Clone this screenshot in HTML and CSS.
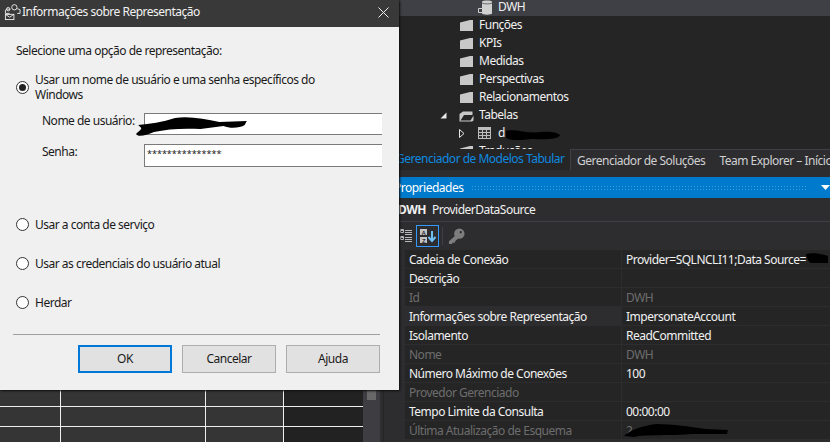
FILE: index.html
```html
<!DOCTYPE html>
<html lang="pt">
<head>
<meta charset="utf-8">
<title>Informações sobre Representação</title>
<link rel="stylesheet" href="styles.css">
</head>
<body>
<div class="desktop">
  <div class="left-pane">
    <div class="sheet">
      <div class="cells">
        <i></i><i></i><i></i><i class="blank"></i>
        <i></i><i></i><i></i><i class="blank"></i>
        <i></i><i></i><i></i><i class="blank"></i>
        <i></i><i></i><i></i><i class="blank"></i>
      </div>
      <div class="vscroll"><span class="vthumb"></span></div>
      <div class="gutter"></div>
    </div>
  </div>

  <div class="right-pane">
    <div class="tree">
      <div class="node sel l2">
        <svg class="ico" width="14" height="15" viewBox="0 0 14 15"><path d="M4 1.500C4 0 14 0 14 1.500V13.500C14 15 4 15 4 13.500Z" fill="#d0d0d0"/><path d="M4 3C6 4.200 12 4.200 14 3" fill="none" stroke="#3f3f46" stroke-width="0.700"/><path d="M0.500 8.500h4v4h-4z" fill="#3f3f46" stroke="#d0d0d0"/></svg>
        <span>DWH</span>
      </div>
      <div class="node"><svg class="folder" width="15" height="13" viewBox="0 0 15 13"><use href="#f"/></svg><span>Funções</span></div>
      <div class="node"><svg class="folder" width="15" height="13" viewBox="0 0 15 13"><use href="#f"/></svg><span>KPIs</span></div>
      <div class="node"><svg class="folder" width="15" height="13" viewBox="0 0 15 13"><use href="#f"/></svg><span>Medidas</span></div>
      <div class="node"><svg class="folder" width="15" height="13" viewBox="0 0 15 13"><use href="#f"/></svg><span>Perspectivas</span></div>
      <div class="node"><svg class="folder" width="15" height="13" viewBox="0 0 15 13"><use href="#f"/></svg><span>Relacionamentos</span></div>
      <div class="node">
        <svg class="twist" width="7" height="7" viewBox="0 0 7 7"><path d="M6.500 0.500V6.500H0.500Z" fill="#e8e8e8"/></svg>
        <svg class="folder" width="15" height="13" viewBox="0 0 15 13"><path d="M0.500 5L4 2.500H13.500V6H5L1.500 11.500H11.500L14.500 6.500V11.500L13 12.500H0.500Z" fill="#c8c8c8"/></svg>
        <span>Tabelas</span>
      </div>
      <div class="node l2">
        <svg class="twist2" width="6" height="9" viewBox="0 0 6 9"><path d="M0.500 0.500L5 4.500L0.500 8.500Z" fill="none" stroke="#e8e8e8"/></svg>
        <svg class="ico" width="13" height="12" viewBox="0 0 13 12"><rect width="13" height="12" fill="#bdbdbd"/><path d="M1 3h3v2h-3zM5 3h3v2h-3zM9 3h3v2h-3zM1 6h3v2h-3zM5 6h3v2h-3zM9 6h3v2h-3zM1 9h3v2h-3zM5 9h3v2h-3zM9 9h3v2h-3z" fill="#333"/></svg>
        <span>d</span>
        <svg class="scrawl table-scrawl" width="58" height="14" viewBox="0 0 58 14"><path d="M3 4C12 1 24 7 38 5C46 4 54 5 57 8C56 12 44 13 30 12C18 13 8 14 3 11Z" fill="#000"/></svg>
      </div>
      <div class="node"><svg class="folder" width="15" height="13" viewBox="0 0 15 13"><use href="#f"/></svg><span>Traduções</span></div>
    </div>

    <div class="tabs">
      <div class="tab active">Gerenciador de Modelos Tabular</div>
      <div class="tab-rest">
        <span>Gerenciador de Soluções</span>
        <span>Team Explorer – Início</span>
      </div>
    </div>

    <div class="props">
      <div class="props-title">
        <span>Propriedades</span>
        <span class="dots"></span>
        <svg width="9" height="5" viewBox="0 0 9 5"><path d="M0 0H9L4.500 5Z" fill="#fff"/></svg>
      </div>
      <div class="props-object"><b>DWH</b><span>ProviderDataSource</span></div>
      <div class="props-tools">
        <svg class="tool-cat" width="12" height="14" viewBox="0 0 12 14"><path d="M0 1.500h4M5 1.500h7M5 3.500h7M5 5.500h7M0 8.500h4M5 8.500h7M5 10.500h7M5 12.500h7" stroke="#b8b8b8" fill="none"/><path d="M0.500 0.500h3v3h-3zM0.500 7.500h3v3h-3z" fill="none" stroke="#b8b8b8"/></svg>
        <span class="tool-on">
          <svg width="18" height="16" viewBox="0 0 18 16"><path d="M1 1h7v6h-7zM1 9h7v6h-7z" fill="#c4c4c4"/><text x="4.500" y="6.500" class="az">A</text><text x="4.500" y="14.500" class="az">Z</text><path d="M13 3v9M9.500 9l3.500 4l3.500-4" fill="none" stroke="#6fc0f5" stroke-width="2"/></svg>
        </span>
        <span class="tool-sep"></span>
        <svg width="17" height="17" viewBox="0 0 18 18"><circle cx="12" cy="6" r="5.500" fill="#7d7d7d"/><circle cx="13.500" cy="4.500" r="1.200" fill="#2d2d30"/><path d="M8.500 7.500L1 14v3h3l1-1.500h2l1-2 3-2.500z" fill="#7d7d7d"/></svg>
      </div>
      <div class="grid">
        <div class="row"><span class="k">Cadeia de Conexão</span><span class="v">Provider=SQLNCLI11;Data Source=</span>
          <svg class="scrawl conn-scrawl" width="24" height="12" viewBox="0 0 24 12"><path d="M1 2C8 0 18 2 23 4V11H6C3 10 2 6 1 2Z" fill="#000"/></svg></div>
        <div class="row"><span class="k">Descrição</span><span class="v"></span></div>
        <div class="row off"><span class="k">Id</span><span class="v">DWH</span></div>
        <div class="row hover"><span class="k">Informações sobre Representação</span><span class="v">ImpersonateAccount</span></div>
        <div class="row"><span class="k">Isolamento</span><span class="v">ReadCommitted</span></div>
        <div class="row off"><span class="k">Nome</span><span class="v">DWH</span></div>
        <div class="row"><span class="k">Número Máximo de Conexões</span><span class="v">100</span></div>
        <div class="row off"><span class="k">Provedor Gerenciado</span><span class="v"></span></div>
        <div class="row"><span class="k">Tempo Limite da Consulta</span><span class="v">00:00:00</span></div>
        <div class="row off"><span class="k">Última Atualização de Esquema</span><span class="v">2</span>
          <svg class="scrawl date-scrawl" width="108" height="15" viewBox="0 0 108 15"><path d="M2 13C8 7 20 3 34 1C50 1 70 4 84 6L106 7L105 11L70 11C50 13 24 11 12 14Z" fill="#000"/></svg></div>
      </div>
    </div>
  </div>

  <div class="dialog">
    <div class="titlebar">
      <svg class="title-icon" width="17" height="18" viewBox="0 0 18 18"><g fill="none" stroke="#e8e8e8"><circle cx="11" cy="4" r="2.800"/><path d="M6 10.500h-4.500v-3.500l2-1h3M14 10.500h3v-4l-3-1"/><circle cx="4.500" cy="6" r="1.800"/><rect x="1.500" y="11.500" width="9" height="5.500"/><path d="M1.500 11.500l4.500 3 4.500-3"/></g></svg>
      <span class="title">Informações sobre Representação</span>
      <svg class="close" width="11" height="11" viewBox="0 0 11 11"><path d="M0.500 0.500L10.500 10.500M10.500 0.500L0.500 10.500" stroke="#f0f0f0" fill="none"/></svg>
    </div>
    <div class="body">
      <p class="lead">Selecione uma opção de representação:</p>
      <div class="opt first">
        <span class="radio on"></span>
        <span class="opt-label">Usar um nome de usuário e uma senha específicos do Windows</span>
      </div>
      <div class="fields">
        <label class="flabel">Nome de usuário:</label>
        <div class="input"><svg class="scrawl user-scrawl" width="116" height="22" viewBox="0 0 110 22" preserveAspectRatio="none"><path d="M3 10C14 9 26 7 38 3C52 1 66 4 80 7L106 6L104 10C100 13 90 14 84 11L62 14C46 13 30 14 18 17C10 21 2 22 1 19C3 16 8 14 5 12Z" fill="#000"/></svg></div>
        <label class="flabel">Senha:</label>
        <div class="input pass">***************</div>
      </div>
      <div class="opt a"><span class="radio"></span><span class="opt-label">Usar a conta de serviço</span></div>
      <div class="opt b"><span class="radio"></span><span class="opt-label">Usar as credenciais do usuário atual</span></div>
      <div class="opt b"><span class="radio"></span><span class="opt-label">Herdar</span></div>
      <div class="rule"></div>
      <div class="buttons">
        <button class="btn default">OK</button>
        <button class="btn">Cancelar</button>
        <button class="btn">Ajuda</button>
      </div>
    </div>
  </div>
</div>
<svg class="defs" width="0" height="0"><defs><path id="f" d="M1 3.500L11 1H14V12H1Z" fill="#c8c8c8"/></defs></svg>
</body>
</html>
```

FILE: styles.css
```css
* { box-sizing: border-box; }
html, body { margin: 0; padding: 0; }
body {
  width: 830px; height: 442px; overflow: hidden;
  background: #2d2d30;
  font: 12px/16px "Noto Sans", "Open Sans", sans-serif;
  letter-spacing: -0.5px;
}
.defs { position: absolute; }
.desktop { position: relative; width: 830px; height: 442px; display: flex; overflow: hidden; }

.left-pane { width: 390px; flex: none; display: flex; flex-direction: column; justify-content: flex-end; }
.sheet { display: flex; height: 64px; background: #1e1e1e; overflow: hidden; }
.cells { width: 363px; flex: none; height: 75px; display: grid; grid-template-columns: 61px 145px 78px 79px; grid-auto-rows: 20px; margin-top: -11px; align-content: start; }
.cells i { background: #353535; border-right: 1px solid #eee; border-bottom: 1px solid #eee; }
.cells .blank { background: #222; border-right: 0; border-bottom: 1px solid #eee; }
.vscroll { width: 17px; flex: none; background: #3e3e42; display: flex; justify-content: center; }
.vthumb { width: 9px; height: 10px; margin-top: 12px; background: #686868; }
.gutter { flex: 1; background: #252526; border-left: 3px solid #2d2d30; border-right: 6px solid #2d2d30; }

.right-pane { flex: 1; display: flex; flex-direction: column; min-width: 0; }
.tree { height: 149px; background: #252526; overflow: hidden; color: #f1f1f1; }
.node { height: 18px; display: flex; align-items: center; padding-left: 69px; position: relative; }
.node.l2 { padding-left: 88px; }
.node.sel { height: 16px; align-items: flex-start; background: #3f3f46; overflow: hidden; }
.node.sel .ico { margin-right: 6px; }
.node.sel span { line-height: 13px; }
.folder { margin-right: 5px; flex: none; }
.ico { margin-right: 7px; flex: none; }
.twist { position: absolute; left: 50px; top: 6px; }
.twist2 { position: absolute; left: 69px; top: 5px; }
.scrawl { position: absolute; }
.table-scrawl { left: 113px; top: 3px; }

.tabs { height: 21px; display: flex; background: #2d2d30; overflow: hidden; }
.tab.active { width: 180px; flex: none; background: #252526; color: #0e8ae0; white-space: nowrap; padding: 2px 0 0 6px; }
.tab-rest { flex: 1; min-width: 0; border-top: 1px solid #3f3f46; border-left: 1px solid #3f3f46; color: #d0d0d0; display: flex; gap: 14px; padding: 3px 0 0 6px; white-space: nowrap; }

.props { margin-top: 7px; flex: 1; display: flex; flex-direction: column; color: #f1f1f1; }
.props-title { height: 21px; background: #007acc; display: flex; align-items: center; padding: 0 0 0 4px; gap: 8px; color: #fff; }
.dots { flex: 1; height: 5px; margin-right: 6px; background-image: radial-gradient(#3f9fdd 0.6px, transparent 0.7px); background-size: 3px 3px; }
.props-object { height: 24px; display: flex; align-items: center; gap: 6px; padding-left: 8px; border-bottom: 1px solid #3f3f46; }
.props-object b { font-weight: 700; }
.props-tools { height: 28px; display: flex; align-items: center; gap: 4px; padding-left: 10px; }
.tool-on { width: 23px; height: 22px; border: 1px solid #3399ff; display: flex; align-items: center; justify-content: center; }
.tool-sep { width: 1px; height: 18px; background: #3f3f46; margin: 0 1px 0 -1px; }
.az { font: 700 6px "Liberation Sans", sans-serif; fill: #2d2d30; text-anchor: middle; }

.grid { margin-left: 15px; flex: 1; }
.row { height: 19px; display: grid; grid-template-columns: 217px 1fr; background: #252526; border-bottom: 1px solid #2d2d30; position: relative; }
.row .k { padding: 2px 0 0 4px; white-space: nowrap; border-right: 1px solid #2d2d30; }
.row .v { padding: 2px 0 0 4px; white-space: nowrap; }
.row.off { color: #6d6d6d; }
.row.hover .k { background: #2d2d30; }
.conn-scrawl { left: 400px; top: 2px; }
.date-scrawl { left: 217px; top: 2px; }

.dialog {
  position: absolute; left: 0; top: 0; width: 399px; height: 390px;
  background: #f0f0f0; color: #1a1a1a;
  box-shadow: 0 0 1px #111, 1px 1px 2px #111;
  display: flex; flex-direction: column;
}
.titlebar { height: 27px; flex: none; background: #393939; color: #f2f2f2; display: flex; align-items: center; padding: 0 10px 3px 4px; }
.title-icon { margin-right: 1px; flex: none; }
.title { flex: 1; }
.body { flex: 1; padding: 16px 19px 0 16px; }
.lead { margin: 0; height: 16px; }
.opt { display: flex; gap: 6px; align-items: center; height: 16px; line-height: 15px; }
.opt.first { margin-top: 12px; height: 32px; width: 320px; }
.opt.a { margin-top: 49px; }
.opt.b { margin-top: 23px; }
.radio { width: 13px; height: 13px; flex: none; border: 1px solid #333; border-radius: 50%; background: #fff; position: relative; }
.radio.on::after { content: ""; position: absolute; left: 2px; top: 2px; width: 7px; height: 7px; border-radius: 50%; background: #222; }
.fields { display: grid; grid-template-columns: 102px 238px; grid-template-rows: 22px 23px; row-gap: 9px; align-items: start; margin: 10px 0 0 26px; }
.flabel { line-height: 16px; }
.input { position: relative; height: 100%; background: #fff; border: 1px solid #7a7a7a; border-right: 0; padding: 0 0 0 2px; }
.user-scrawl { left: -10px; top: 1px; }
.pass { font-size: 9px; letter-spacing: 0; line-height: 17px; }
.rule { height: 1px; background: #a0a0a0; margin: 24px 0 0 -3px; }
.buttons { display: flex; justify-content: flex-end; gap: 10px; margin-top: 10px; }
.btn { width: 94px; height: 28px; background: #e1e1e1; border: 1px solid #adadad; font: inherit; letter-spacing: inherit; color: #1a1a1a; padding: 0; }
.btn.default { border: 2px solid #0078d7; }
```
